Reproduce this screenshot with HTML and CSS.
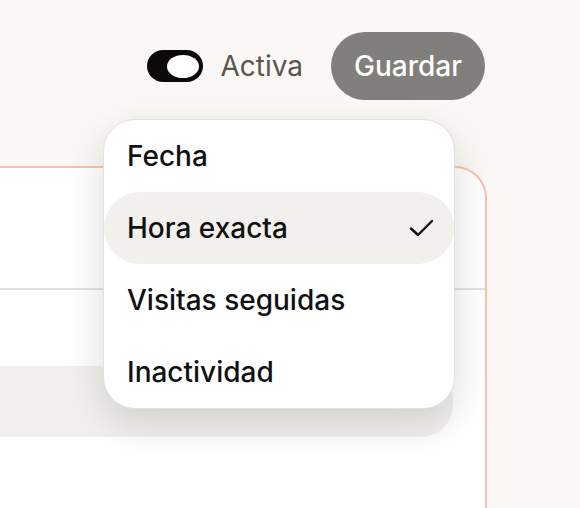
FILE: index.html
```html
<!DOCTYPE html>
<html lang="es">
<head>
    <meta charset="UTF-8">
    <meta name="viewport" content="width=device-width, initial-scale=1.0">
    <title>Regla</title>
    <link rel="stylesheet" href="styles.css">
</head>
<body>
    <div class="page">
        <!-- Barra superior: interruptor y botón -->
        <div class="toolbar">
            <label class="switch">
                <span class="switch-track"><span class="switch-knob"></span></span>
                <span class="switch-label">Activa</span>
            </label>
            <button type="button" class="save">Guardar</button>
        </div>

        <!-- Tarjeta de la regla -->
        <div class="card">
            <div class="card-head"></div>
            <div class="card-body">
                <div class="field"></div>
            </div>
        </div>

        <!-- Menú desplegable del tipo de disparador -->
        <ul class="menu">
            <li class="menu-item">Fecha</li>
            <li class="menu-item selected">
                Hora exacta
                <svg class="check" width="28" height="24" viewBox="0 0 28 24" fill="none">
                    <path d="M3 12.5 L10 19 L24 5" stroke="#111" stroke-width="2.4" stroke-linecap="round" stroke-linejoin="round"/>
                </svg>
            </li>
            <li class="menu-item">Visitas seguidas</li>
            <li class="menu-item">Inactividad</li>
        </ul>
    </div>
</body>
</html>
```

FILE: styles.css
```css
body {
    margin: 0;
    background-color: #f9f8f5;
    font-family: Inter, "Noto Sans", sans-serif;
    color: #111;
    overflow: hidden;
}
.page {
    position: relative;
    height: 508px;
    padding: 32px 93px 0 0;
    box-sizing: border-box;
}

/* Barra superior */
.toolbar {
    display: flex;
    justify-content: flex-end;
    align-items: center;
    gap: 28px;
    padding-right: 2px;
}
.switch {
    display: flex;
    align-items: center;
    gap: 17px;
}
.switch-track {
    display: flex;
    justify-content: flex-end;
    align-items: center;
    width: 56px;
    height: 32px;
    padding: 0 4px;
    box-sizing: border-box;
    border-radius: 16px;
    background-color: #0c0a09;
}
.switch-knob {
    width: 32px;
    height: 23px;
    border-radius: 50%;
    background-color: #fff;
}
.switch-label {
    font-size: 28px;
    color: #575653;
}
.save {
    height: 68px;
    padding: 0 23px;
    border: none;
    border-radius: 34px;
    background-color: #807f7c;
    color: #fff;
    font-family: inherit;
    font-size: 28px;
    font-weight: 500;
}

/* Tarjeta */
.card {
    margin: 66px 0 0 -40px;
    height: 342px;
    box-sizing: border-box;
    background-color: #fff;
    border: 2px solid #fcc0ac;
    border-bottom: none;
    border-radius: 32px 32px 0 0;
}
.card-head {
    height: 120px;
    border-bottom: 2px solid #e5e3de;
}
.card-body {
    padding: 76px 32px 0 0;
}
.field {
    height: 71px;
    background-color: #f1f0ec;
    border-radius: 0 32px 32px 0;
}

/* Menú desplegable */
.menu {
    position: absolute;
    left: 103px;
    top: 119px;
    width: 352px;
    margin: 0;
    padding: 0;
    list-style: none;
    background-color: #fff;
    border: 1px solid #e3e1dc;
    border-radius: 32px;
    box-shadow: 0 14px 40px rgba(0, 0, 0, 0.14);
    box-sizing: border-box;
}
.menu-item {
    display: flex;
    justify-content: space-between;
    align-items: center;
    height: 72px;
    padding: 0 18px 0 23px;
    border-radius: 36px;
    font-size: 28px;
    font-weight: 500;
}
.menu-item.selected {
    background-color: #f1f0ec;
}
```
